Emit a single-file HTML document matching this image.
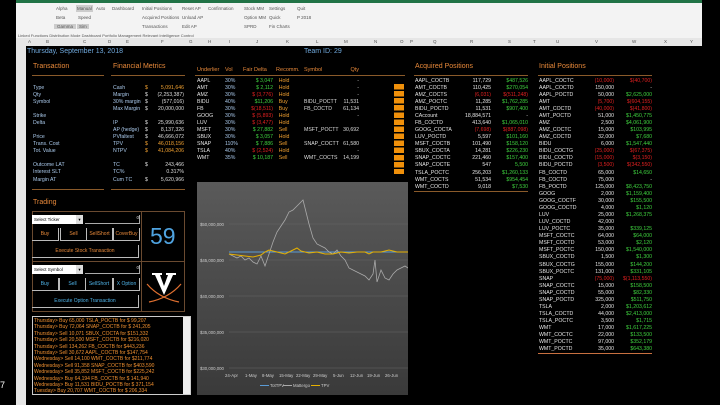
<!DOCTYPE html>
<html><head><meta charset="utf-8"><style>
*{margin:0;padding:0;box-sizing:border-box}
body{width:720px;height:405px;background:#000;overflow:hidden;position:relative;font-family:"Liberation Sans",sans-serif;font-size:5.2px;color:#ddd}
.a{position:absolute;white-space:nowrap}
table{position:absolute;border-collapse:collapse;table-layout:fixed}
td{height:7.08px;line-height:7.08px;padding:0;white-space:nowrap;font-size:5.2px;overflow:hidden}
.r{text-align:right}.g{color:#3fd23f}.rd{color:#e02020}.o{color:#f0a030}.b{color:#a9c8ea}.w{color:#e4e4e4}
.h{color:#e8893a;font-size:7px}
.ul{position:absolute;height:1px;background:#8a5a2a}
.btn{position:absolute;border:1px solid #bbb;border-top:none;border-left:none;color:#e8893a;text-align:center;line-height:12px;font-size:5px}
.btn2{color:#4fb3e8}
</style></head><body>
<div class="a" style="left:16px;top:0;width:686px;height:3px;background:#217346"></div>
<div class="a" style="left:16px;top:3px;width:686px;height:35px;background:#f3f3f3;color:#555;font-size:4.5px">
<span class="a" style="left:40px;top:3px">Alpha</span><span class="a" style="left:40px;top:12px">Beta</span><span class="a" style="left:38px;top:21px;background:#ccc;padding:0 3px">Gamma</span>
<span class="a" style="left:60px;top:2px;background:#ccc;padding:1px">Manual</span><span class="a" style="left:80px;top:3px">Auto</span><span class="a" style="left:62px;top:12px">Speed</span><span class="a" style="left:61px;top:21px;background:#ccc;padding:0 2px">Sim</span>
<span class="a" style="left:96px;top:3px">Dashboard</span>
<span class="a" style="left:126px;top:3px">Initial Positions</span><span class="a" style="left:166px;top:3px">Reset AP</span><span class="a" style="left:192px;top:3px">Confirmation</span>
<span class="a" style="left:126px;top:12px">Acquired Positions</span><span class="a" style="left:166px;top:12px">Unload AP</span>
<span class="a" style="left:126px;top:21px">Transactions</span><span class="a" style="left:166px;top:21px">Edit AP</span>
<span class="a" style="left:228px;top:3px">Stock MM</span><span class="a" style="left:253px;top:3px">Settings</span><span class="a" style="left:228px;top:12px">Option MM</span><span class="a" style="left:253px;top:12px">Quick</span><span class="a" style="left:228px;top:21px">SPRD</span><span class="a" style="left:253px;top:21px">Fin Charts</span>
<span class="a" style="left:281px;top:3px">Quit</span><span class="a" style="left:281px;top:12px">P 2018</span>
<span class="a" style="left:2px;top:30px;font-size:4px">Linked Functions   Distribution      Mode         Dashboard                 Portfolio Management                  Relevant Intelligence        Control</span>
</div>
<div class="a" style="left:16px;top:38px;width:686px;height:8px;background:#e6e6e6;color:#555;font-size:4.5px;line-height:8px">
<span class="a" style="left:12px">A</span><span class="a" style="left:30px">B</span><span class="a" style="left:67px">C</span><span class="a" style="left:92px">D</span><span class="a" style="left:110px">E</span><span class="a" style="left:145px">F</span><span class="a" style="left:173px">G</span><span class="a" style="left:192px">H</span><span class="a" style="left:213px">I</span><span class="a" style="left:240px">J</span><span class="a" style="left:270px">K</span><span class="a" style="left:300px">L</span><span class="a" style="left:328px">M</span><span class="a" style="left:358px">N</span><span class="a" style="left:384px">O</span><span class="a" style="left:394px">P</span><span class="a" style="left:417px">Q</span><span class="a" style="left:454px">R</span><span class="a" style="left:492px">S</span><span class="a" style="left:517px">T</span><span class="a" style="left:540px">U</span><span class="a" style="left:579px">V</span><span class="a" style="left:616px">W</span><span class="a" style="left:648px">X</span><span class="a" style="left:674px">Y</span></div>
<div class="a" style="left:16px;top:46px;width:10px;height:359px;background:#e6e6e6"></div>
<div class="a" style="left:0;top:380px;color:#fff;font-size:9px">7</div>
<div class="a" style="left:27px;top:48px;color:#6fa8dc;font-size:7px">Thursday, September 13, 2018</div>
<div class="a" style="left:304px;top:48px;color:#6fa8dc;font-size:7px">Team ID: 29</div>
<div class="a h" style="left:33px;top:63px">Transaction</div><div class="ul" style="left:32px;top:75px;width:72px"></div>
<div class="a h" style="left:113px;top:63px">Financial Metrics</div><div class="ul" style="left:111px;top:75px;width:74px"></div>
<div class="ul" style="left:32px;top:189px;width:72px"></div><div class="ul" style="left:111px;top:189px;width:74px"></div>
<table style="left:33px;top:84.5px;width:70px" class="b"><tr><td>Type</td></tr><tr><td>Qty</td></tr><tr><td>Symbol</td></tr><tr><td></td></tr><tr><td>Strike</td></tr><tr><td>Delta</td></tr><tr><td></td></tr><tr><td>Price</td></tr><tr><td>Trans. Cost</td></tr><tr><td>Tot. Value</td></tr><tr><td></td></tr><tr><td>Outcome LAT</td></tr><tr><td>Interest SLT</td></tr><tr><td>Margin AT</td></tr></table>
<table style="left:113px;top:84.5px;width:71px"><colgroup><col style="width:32px"><col style="width:8px"><col></colgroup><tr><td class="b">Cash</td><td class="o">$</td><td class="r o">5,091,646</td></tr><tr><td class="b">Margin</td><td>$</td><td class="r">(2,253,387)</td></tr><tr><td class="b">30% margin</td><td>$</td><td class="r">(577,016)</td></tr><tr><td class="b">Max Margin</td><td>$</td><td class="r">20,000,000</td></tr><tr><td></td><td></td><td></td></tr><tr><td class="b">IP</td><td>$</td><td class="r">25,990,636</td></tr><tr><td class="b">AP (hedge)</td><td>$</td><td class="r">8,137,326</td></tr><tr><td class="b">PVfaltest</td><td>$</td><td class="r">46,666,072</td></tr><tr><td class="b">TPV</td><td class="o">$</td><td class="r o">46,018,156</td></tr><tr><td class="b">NTPV</td><td class="o">$</td><td class="r o">41,084,206</td></tr><tr><td></td><td></td><td></td></tr><tr><td class="b">TC</td><td>$</td><td class="r">243,466</td></tr><tr><td class="b">TC%</td><td></td><td class="r">0.317%</td></tr><tr><td class="b">Cum TC</td><td>$</td><td class="r">5,620,966</td></tr></table>
<table style="left:197px;top:67px;width:162px">
<colgroup><col style="width:28px"><col style="width:18px"><col style="width:30px"><col style="width:31px"><col style="width:37px"><col style="width:18px"></colgroup>
<tr style="color:#e8893a"><td style="font-size:5.5px">Underlier</td><td style="font-size:5.5px">Vol</td><td style="font-size:5.5px">Fair Delta</td><td style="font-size:5.5px">&nbsp;&nbsp;Recomm.</td><td style="font-size:5.5px">Symbol</td><td class="r" style="font-size:5.5px">Qty</td></tr>
<tr><td style="height:3.5px"></td></tr>
<tr><td class="w">AAPL</td><td class="b">30%</td><td class="r g">$ 3,047</td><td class="o">&nbsp;&nbsp;&nbsp;&nbsp;Hold</td><td></td><td class="r">-</td></tr>
<tr><td class="w">AMT</td><td class="b">30%</td><td class="r g">$ 2,112</td><td class="o">&nbsp;&nbsp;&nbsp;&nbsp;Hold</td><td></td><td class="r">-</td></tr>
<tr><td class="w">AMZ</td><td class="b">30%</td><td class="r rd">$ (3,776)</td><td class="o">&nbsp;&nbsp;&nbsp;&nbsp;Hold</td><td></td><td class="r">-</td></tr>
<tr><td class="w">BIDU</td><td class="b">40%</td><td class="r g">$11,206</td><td class="o">&nbsp;&nbsp;&nbsp;&nbsp;Buy</td><td>BIDU_POCTT</td><td class="r">11,531</td></tr>
<tr><td class="w">FB</td><td class="b">30%</td><td class="r rd">$(18,511)</td><td class="o">&nbsp;&nbsp;&nbsp;&nbsp;Buy</td><td>FB_COCTD</td><td class="r">61,134</td></tr>
<tr><td class="w">GOOG</td><td class="b">30%</td><td class="r rd">$ (5,893)</td><td class="o">&nbsp;&nbsp;&nbsp;&nbsp;Hold</td><td></td><td class="r">-</td></tr>
<tr><td class="w">LUV</td><td class="b">30%</td><td class="r rd">$ (3,477)</td><td class="o">&nbsp;&nbsp;&nbsp;&nbsp;Hold</td><td></td><td class="r"></td></tr>
<tr><td class="w">MSFT</td><td class="b">30%</td><td class="r g">$ 27,882</td><td class="o">&nbsp;&nbsp;&nbsp;&nbsp;Sell</td><td>MSFT_POCTT</td><td class="r">30,692</td></tr>
<tr><td class="w">SBUX</td><td class="b">30%</td><td class="r g">$ 3,057</td><td class="o">&nbsp;&nbsp;&nbsp;&nbsp;Hold</td><td></td><td class="r"></td></tr>
<tr><td class="w">SNAP</td><td class="b">110%</td><td class="r g">$ 7,886</td><td class="o">&nbsp;&nbsp;&nbsp;&nbsp;Sell</td><td>SNAP_COCTT</td><td class="r">61,580</td></tr>
<tr><td class="w">TSLA</td><td class="b">40%</td><td class="r rd">$ (2,524)</td><td class="o">&nbsp;&nbsp;&nbsp;&nbsp;Hold</td><td></td><td class="r">-</td></tr>
<tr><td class="w">WMT</td><td class="b">35%</td><td class="r g">$ 10,187</td><td class="o">&nbsp;&nbsp;&nbsp;&nbsp;Sell</td><td>WMT_COCTS</td><td class="r">14,199</td></tr>
</table>
<div class="ul" style="left:195px;top:75px;width:210px"></div>
<div class="a" style="left:394px;top:84px;width:10px;height:90px;background:repeating-linear-gradient(#f0900a 0,#f0900a 5.5px,#000 5.5px,#000 7.08px)"></div>
<div class="a h" style="left:415px;top:63px">Acquired Positions</div><div class="ul" style="left:414px;top:75px;width:114px"></div>
<table style="left:415px;top:77.5px;width:113px"><colgroup><col style="width:45px"><col style="width:31px"><col></colgroup>
<tr><td class="w">AAPL_COCTB</td><td class="r w">117,729</td><td class="r g">$487,526</td></tr>
<tr><td class="w">AMT_COCTB</td><td class="r w">110,425</td><td class="r g">$270,054</td></tr>
<tr><td class="w">AMZ_COCTS</td><td class="r rd">(6,031)</td><td class="r rd">$(511,248)</td></tr>
<tr><td class="w">AMZ_POCTC</td><td class="r w">11,285</td><td class="r g">$1,762,285</td></tr>
<tr><td class="w">BIDU_POCTD</td><td class="r w">11,531</td><td class="r g">$907,400</td></tr>
<tr><td class="w">CAccount</td><td class="r w">18,884,571</td><td class="r w">-</td></tr>
<tr><td class="w">FB_COCTD</td><td class="r w">413,640</td><td class="r g">$1,065,010</td></tr>
<tr><td class="w">GOOG_COCTA</td><td class="r rd">(7,698)</td><td class="r rd">$(887,098)</td></tr>
<tr><td class="w">LUV_POCTD</td><td class="r w">5,597</td><td class="r g">$101,160</td></tr>
<tr><td class="w">MSFT_COCTB</td><td class="r w">101,490</td><td class="r g">$158,120</td></tr>
<tr><td class="w">SBUX_COCTA</td><td class="r w">14,281</td><td class="r g">$226,230</td></tr>
<tr><td class="w">SNAP_COCTC</td><td class="r w">221,460</td><td class="r g">$157,400</td></tr>
<tr><td class="w">SNAP_COCTE</td><td class="r w">547</td><td class="r g">5,500</td></tr>
<tr><td class="w">TSLA_POCTC</td><td class="r w">256,203</td><td class="r g">$1,260,133</td></tr>
<tr><td class="w">WMT_COCTS</td><td class="r w">51,534</td><td class="r g">$954,454</td></tr>
<tr><td class="w">WMT_COCTD</td><td class="r w">9,018</td><td class="r g">$7,530</td></tr>
</table>
<div class="ul" style="left:414px;top:191px;width:114px"></div>
<div class="a h" style="left:539px;top:63px">Initial Positions</div><div class="ul" style="left:538px;top:75px;width:114px"></div>
<table style="left:539px;top:77.5px;width:113px"><colgroup><col style="width:45px"><col style="width:30px"><col></colgroup>
<tr><td class="w">AAPL_COCTC</td><td class="r rd">(10,000)</td><td class="r rd">$(40,700)</td></tr>
<tr><td class="w">AAPL_COCTD</td><td class="r w">150,000</td><td class="r w">-</td></tr>
<tr><td class="w">AAPL_POCTD</td><td class="r w">50,000</td><td class="r g">$2,625,000</td></tr>
<tr><td class="w">AMT</td><td class="r rd">(5,700)</td><td class="r rd">$(604,155)</td></tr>
<tr><td class="w">AMT_COCTD</td><td class="r rd">(40,000)</td><td class="r rd">$(41,800)</td></tr>
<tr><td class="w">AMT_POCTD</td><td class="r w">51,000</td><td class="r g">$1,450,775</td></tr>
<tr><td class="w">AMZ</td><td class="r w">2,500</td><td class="r g">$4,061,900</td></tr>
<tr><td class="w">AMZ_COCTC</td><td class="r w">15,000</td><td class="r g">$103,995</td></tr>
<tr><td class="w">AMZ_COCTD</td><td class="r w">32,000</td><td class="r g">$7,680</td></tr>
<tr><td class="w">BIDU</td><td class="r w">6,000</td><td class="r g">$1,547,440</td></tr>
<tr><td class="w">BIDU_COCTG</td><td class="r rd">(25,000)</td><td class="r rd">$(67,375)</td></tr>
<tr><td class="w">BIDU_COCTD</td><td class="r rd">(15,000)</td><td class="r rd">$(3,150)</td></tr>
<tr><td class="w">BIDU_POCTD</td><td class="r rd">(3,500)</td><td class="r rd">$(342,550)</td></tr>
<tr><td class="w">FB_COCTD</td><td class="r w">65,000</td><td class="r g">$14,650</td></tr>
<tr><td class="w">FB_COCTD</td><td class="r w">75,000</td><td class="r w">-</td></tr>
<tr><td class="w">FB_POCTD</td><td class="r w">125,000</td><td class="r g">$8,423,750</td></tr>
<tr><td class="w">GOOG</td><td class="r w">2,000</td><td class="r g">$1,159,400</td></tr>
<tr><td class="w">GOOG_COCTF</td><td class="r w">30,000</td><td class="r g">$155,500</td></tr>
<tr><td class="w">GOOG_COCTD</td><td class="r w">4,000</td><td class="r g">$1,120</td></tr>
<tr><td class="w">LUV</td><td class="r w">25,000</td><td class="r g">$1,268,375</td></tr>
<tr><td class="w">LUV_COCTD</td><td class="r w">42,000</td><td class="r w"></td></tr>
<tr><td class="w">LUV_POCTC</td><td class="r w">35,000</td><td class="r g">$339,125</td></tr>
<tr><td class="w">MSFT_COCTC</td><td class="r w">64,000</td><td class="r g">$64,000</td></tr>
<tr><td class="w">MSFT_COCTD</td><td class="r w">53,000</td><td class="r g">$2,120</td></tr>
<tr><td class="w">MSFT_POCTC</td><td class="r w">150,000</td><td class="r g">$1,540,000</td></tr>
<tr><td class="w">SBUX_COCTD</td><td class="r w">1,500</td><td class="r g">$1,300</td></tr>
<tr><td class="w">SBUX_COCTG</td><td class="r w">155,000</td><td class="r g">$144,200</td></tr>
<tr><td class="w">SBUX_POCTC</td><td class="r w">131,000</td><td class="r g">$331,105</td></tr>
<tr><td class="w">SNAP</td><td class="r rd">(75,000)</td><td class="r rd">$(1,113,550)</td></tr>
<tr><td class="w">SNAP_COCTC</td><td class="r w">15,000</td><td class="r g">$158,500</td></tr>
<tr><td class="w">SNAP_COCTD</td><td class="r w">55,000</td><td class="r g">$82,330</td></tr>
<tr><td class="w">SNAP_POCTD</td><td class="r w">325,000</td><td class="r g">$511,750</td></tr>
<tr><td class="w">TSLA</td><td class="r w">2,000</td><td class="r g">$1,203,612</td></tr>
<tr><td class="w">TSLA_COCTD</td><td class="r w">44,000</td><td class="r g">$2,413,000</td></tr>
<tr><td class="w">TSLA_POCTC</td><td class="r w">3,500</td><td class="r g">$1,715</td></tr>
<tr><td class="w">WMT</td><td class="r w">17,000</td><td class="r g">$1,617,225</td></tr>
<tr><td class="w">WMT_COCTC</td><td class="r w">22,000</td><td class="r g">$133,500</td></tr>
<tr><td class="w">WMT_POCTC</td><td class="r w">97,000</td><td class="r g">$352,179</td></tr>
<tr><td class="w">WMT_POCTD</td><td class="r w">35,000</td><td class="r g">$643,380</td></tr>
</table>
<div class="ul" style="left:538px;top:353px;width:114px;background:#c87040"></div>
<svg class="a" style="left:197px;top:182px" width="211" height="213" viewBox="0 0 211 213">
<defs><linearGradient id="cg" x1="0" y1="0" x2="0" y2="1"><stop offset="0" stop-color="#5a5a5a"/><stop offset="1" stop-color="#3a3a3a"/></linearGradient></defs>
<rect width="211" height="213" fill="url(#cg)"/>
<g stroke="#666" stroke-width="0.5"><line x1="32" x2="211" y1="42" y2="42"/><line x1="32" x2="211" y1="78" y2="78"/><line x1="32" x2="211" y1="114" y2="114"/><line x1="32" x2="211" y1="150" y2="150"/><line x1="32" x2="211" y1="186" y2="186"/></g>
<g fill="#ccc" font-size="4.3" font-family="Liberation Sans"><text x="3" y="44">$50,000,000</text><text x="3" y="80">$45,000,000</text><text x="3" y="116">$40,000,000</text><text x="3" y="152">$35,000,000</text><text x="3" y="188">$30,000,000</text>
<text x="28" y="195">24-Apr</text><text x="48" y="195">1-May</text><text x="65" y="195">8-May</text><text x="82" y="195">15-May</text><text x="99" y="195">22-May</text><text x="116" y="195">29-May</text><text x="136" y="195">5-Jun</text><text x="153" y="195">12-Jun</text><text x="170" y="195">19-Jun</text><text x="188" y="195">26-Jun</text>
<text x="73" y="205">TotTPV</text><text x="96" y="205">Mattergo</text><text x="124" y="205">TPV</text></g>
<line x1="63" x2="72" y1="203.5" y2="203.5" stroke="#5b9bd5"/><line x1="86" x2="95" y1="203.5" y2="203.5" stroke="#aaa"/><line x1="114" x2="123" y1="203.5" y2="203.5" stroke="#e6b000"/>
<line x1="32" x2="211" y1="70" y2="70" stroke="#5b9bd5" stroke-width="1"/>
<polyline fill="none" stroke="#aaa" stroke-width="0.8" points="32,72 36,74 40,76 44,74 48,78 52,76 56,80 60,82 64,74 68,84 72,72 76,60 80,50 84,44 88,38 92,30 96,28 100,24 104,20 106,18 108,26 112,42 116,56 120,62 124,64 128,66 132,70 136,72 140,68 144,74 148,78 152,86 156,88 160,90 164,92 168,94 172,98 176,92 178,78 180,100 184,88 188,96 192,98 196,92 200,88 204,86 208,84 211,86"/>
<polyline fill="none" stroke="#e6b000" stroke-width="1" points="32,72 40,73 48,74 56,75 64,73 68,70 72,68 80,70 88,72 96,68 100,66 104,69 112,71 120,70 128,72 136,72 144,70 152,71 160,70 168,70 172,72 176,70 184,70 192,68 200,70 211,70"/>
</svg>
<div class="a h" style="left:33px;top:199px">Trading</div>
<div class="a" style="left:32px;top:211px;width:153px;height:101px;border:1px solid #6a4a30"></div>
<div class="a" style="left:141px;top:211px;width:1px;height:101px;background:#6a4a30"></div>
<div class="a" style="left:32px;top:261px;width:153px;height:1px;background:#6a4a30"></div>
<div class="a" style="left:32px;top:215px;width:51px;height:9px;background:#fff;color:#000;font-size:4.5px;line-height:9px;padding-left:2px">Select Ticker<span style="position:absolute;right:0;top:0;width:7px;height:9px;background:#ddd;text-align:center">▾</span></div>
<div class="a" style="left:85px;top:215px;width:55px;height:9px;border-bottom:1px solid #aaa;border-right:1px solid #aaa;text-align:right;font-size:4.5px">0</div>
<div class="btn" style="left:32px;top:228px;width:27px;height:13px">Buy</div><div class="btn" style="left:60px;top:228px;width:27px;height:13px;border-left:1px solid #bbb">Sell</div><div class="btn" style="left:87px;top:228px;width:26px;height:13px">SellShort</div><div class="btn" style="left:113px;top:228px;width:27px;height:13px;border-left:1px solid #bbb">CoverBuy</div>
<div class="btn" style="left:32px;top:245px;width:107px;height:13px">Execute Stock Transaction</div>
<div class="a" style="left:150px;top:223px;color:#4fa3e0;font-size:23px">59</div>
<div class="a" style="left:32px;top:265px;width:51px;height:9px;background:#fff;color:#000;font-size:4.5px;line-height:9px;padding-left:2px">Select Symbol<span style="position:absolute;right:0;top:0;width:7px;height:9px;background:#ddd;text-align:center">▾</span></div>
<div class="a" style="left:85px;top:265px;width:55px;height:9px;border-bottom:1px solid #aaa;border-right:1px solid #aaa;text-align:right;font-size:4.5px">0</div>
<div class="btn btn2" style="left:32px;top:278px;width:27px;height:13px">Buy</div><div class="btn btn2" style="left:59px;top:278px;width:27px;height:13px;border-left:1px solid #bbb">Sell</div><div class="btn btn2" style="left:86px;top:278px;width:27px;height:13px">SellShort</div><div class="btn btn2" style="left:113px;top:278px;width:27px;height:13px;border-left:1px solid #bbb">X Option</div>
<div class="btn btn2" style="left:32px;top:295px;width:107px;height:13px">Execute Option Transaction</div>
<svg class="a" style="left:143px;top:268px" width="42" height="40" viewBox="0 0 42 40"><path d="M9 5 H19 V7 H17 L21 18 L25 7 H23 V5 H33 V7 H30 L21 27 L12 7 H9Z" fill="#fff"/><g stroke="#e07030" stroke-width="1.2" fill="none"><path d="M4 16 Q16 30 36 34"/><path d="M38 16 Q26 30 6 34"/></g></svg>
<div class="a" style="left:32px;top:316px;width:159px;height:79px;border:1px solid #ccc;background:#000;color:#f09030;font-size:5px;line-height:6.4px;padding:1px;overflow:hidden">
Thursday&gt; Buy 65,000 TSLA_POCTB for $ 99,207<br>Thursday&gt; Buy 72,064 SNAP_COCTB for $ 241,205<br>Thursday&gt; Sell 10,071 SBUX_COCTA for $151,332<br>Thursday&gt; Sell 20,500 MSFT_COCTB for $216,020<br>Thursday&gt; Sell 134,262 FB_COCTB for $443,236<br>Thursday&gt; Sell 30,672 AAPL_COCTB for $147,754<br>Wednesday&gt; Sell 14,100 WMT_COCTB for $211,774<br>Wednesday&gt; Sell 91,358 SNAP_COCTB for $403,590<br>Wednesday&gt; Sell 35,852 MSFT_COCTB for $225,242<br>Wednesday&gt; Buy 64,194 FB_COCTB for $ 141,940<br>Wednesday&gt; Buy 11,531 BIDU_POCTB for $ 371,154<br>Tuesday&gt; Buy 20,707 WMT_COCTB for $ 206,334</div>
<div class="a" style="left:183px;top:317px;width:7px;height:77px;background:#eee"></div>
</body></html>
